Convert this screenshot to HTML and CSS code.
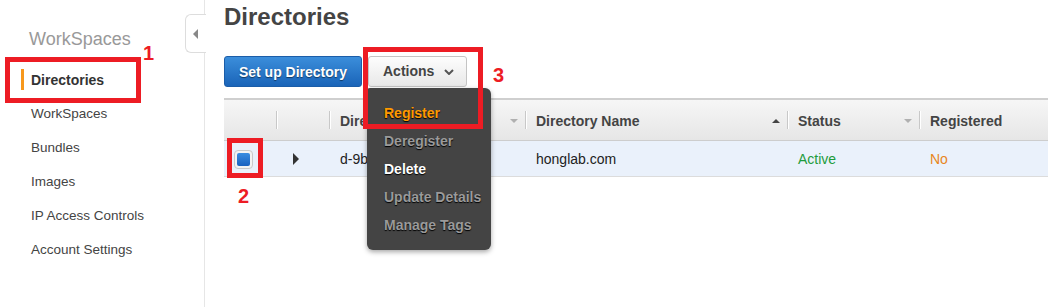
FILE: index.html
```html
<!DOCTYPE html>
<html lang="en">
<head>
  <meta charset="UTF-8">
  <meta name="viewport" content="width=device-width, initial-scale=1.0">
  <title>Directories - WorkSpaces</title>
  <link rel="stylesheet" href="styles.css">
</head>
<body>
  <div class="page">
    <aside class="sidebar">
      <div class="sidebar-title">WorkSpaces</div>
      <ul class="nav">
        <li class="nav-item active">Directories</li>
        <li class="nav-item">WorkSpaces</li>
        <li class="nav-item">Bundles</li>
        <li class="nav-item">Images</li>
        <li class="nav-item">IP Access Controls</li>
        <li class="nav-item">Account Settings</li>
      </ul>
      <div class="collapse-tab"><span class="collapse-arrow"></span></div>
    </aside>

    <main class="content">
      <h1>Directories</h1>

      <div class="toolbar">
        <button class="btn btn-primary">Set up Directory</button>
        <div class="actions">
          <button class="btn btn-default">
            Actions
            <svg class="chevron" width="10" height="6" viewBox="0 0 10 6"><path d="M1 1 L5 5 L9 1" fill="none" stroke="#555" stroke-width="2"/></svg>
          </button>
          <ul class="dropdown">
            <li class="menu-item highlight">Register</li>
            <li class="menu-item disabled">Deregister</li>
            <li class="menu-item">Delete</li>
            <li class="menu-item disabled">Update Details</li>
            <li class="menu-item disabled">Manage Tags</li>
          </ul>
        </div>
      </div>

      <div class="table">
        <div class="row head">
          <div class="cell"></div>
          <div class="cell divided"></div>
          <div class="cell divided">Directory ID<span class="sort down"></span></div>
          <div class="cell divided">Directory Name<span class="sort up"></span></div>
          <div class="cell divided">Status<span class="sort down"></span></div>
          <div class="cell divided">Registered</div>
        </div>
        <div class="row selected">
          <div class="cell"><span class="checkbox"><span class="checkbox-fill"></span></span></div>
          <div class="cell"><span class="expand"></span></div>
          <div class="cell">d-9b67230f1d</div>
          <div class="cell">honglab.com</div>
          <div class="cell status-active">Active</div>
          <div class="cell status-no">No</div>
        </div>
      </div>
    </main>
  </div>

  <!-- anotaciones -->
  <div class="mark mark-1"></div>
  <div class="mark mark-2"></div>
  <div class="mark mark-3"></div>
  <span class="mark-num num-1">1</span>
  <span class="mark-num num-2">2</span>
  <span class="mark-num num-3">3</span>
</body>
</html>
```

FILE: styles.css
```css
body {
  margin: 0;
  font-family: 'Liberation Sans', Arial, sans-serif;
  font-size: 14px;
  color: #444;
  background: #fff;
  height: 100vh;
  overflow: hidden;
}
.page {
  display: flex;
  height: 100%;
}

/* Sidebar */
.sidebar {
  position: relative;
  width: 205px;
  flex-shrink: 0;
  border-right: 1px solid #e6e6e6;
  padding-top: 28px;
  box-sizing: border-box;
}
.sidebar-title {
  padding-left: 29px;
  font-size: 18px;
  line-height: 22px;
  color: #999;
}
.nav {
  list-style: none;
  margin: 13px 0 0;
  padding: 0;
}
.nav-item {
  position: relative;
  padding-left: 31px;
  line-height: 34px;
  font-size: 13.5px;
  color: #444;
}
.nav-item.active {
  font-weight: bold;
  font-size: 14px;
  color: #333;
}
.nav-item.active::before {
  content: "";
  position: absolute;
  left: 21px;
  top: 6px;
  width: 3px;
  height: 21px;
  background: #f7981d;
}
.collapse-tab {
  position: absolute;
  left: 185px;
  top: 14px;
  width: 21px;
  height: 39px;
  box-sizing: border-box;
  border: 1px solid #ddd;
  border-right: none;
  border-radius: 6px 0 0 6px;
  background: #fff;
  display: flex;
  align-items: center;
  padding-left: 7px;
}
.collapse-arrow {
  width: 0;
  height: 0;
  border-right: 5px solid #888;
  border-top: 5px solid transparent;
  border-bottom: 5px solid transparent;
}

/* Content */
.content {
  flex: 1;
  padding-left: 19px;
}
h1 {
  margin: 3px 0 0;
  font-size: 24px;
  line-height: 28px;
  color: #444;
}
.toolbar {
  display: flex;
  gap: 6px;
  margin-top: 25px;
}
.btn {
  height: 31px;
  border-radius: 3px;
  font-family: inherit;
  font-size: 14px;
  font-weight: bold;
  cursor: pointer;
  box-sizing: border-box;
  padding-bottom: 1px;
}
.btn-primary {
  width: 138px;
  color: #fff;
  background: linear-gradient(#3b8edb, #1a64b8);
  border: 1px solid #1b5da8;
  text-shadow: 0 1px 1px rgba(0, 0, 0, 0.5);
}
.btn-default {
  width: 99px;
  color: #444;
  background: linear-gradient(#fdfdfd, #e8e8e8);
  border: 1px solid #c4c4c4;
  display: flex;
  align-items: center;
  padding: 0 0 1px 14px;
  gap: 10px;
}
.chevron {
  display: block;
  margin-top: 1px;
}
.actions {
  position: relative;
}
.dropdown {
  position: absolute;
  left: -1px;
  top: 32px;
  width: 124px;
  margin: 0;
  padding: 11px 0;
  list-style: none;
  background: #444;
  border-radius: 3px 6px 6px 6px;
  box-shadow: 0 2px 5px rgba(0, 0, 0, 0.35);
  z-index: 5;
}
.menu-item {
  padding-left: 17px;
  line-height: 28px;
  font-weight: bold;
  color: #fff;
  text-shadow: 0 1px 1px #000;
}
.menu-item.highlight {
  color: #ff9900;
}
.menu-item.disabled {
  color: #9a9a9a;
}

/* Table */
.table {
  margin-top: 11px;
  border-top: 2px solid #cfcfcf;
}
.row {
  display: grid;
  grid-template-columns: 52px 53px 196px 262px 132px 1fr;
}
.row.head {
  height: 41px;
  background: linear-gradient(#f6f6f6, #e6e6e6);
  border-bottom: 1px solid #cdcdcd;
  box-sizing: border-box;
  font-weight: bold;
  color: #444;
}
.row.head .cell {
  padding-top: 1px;
}
.row.selected {
  height: 36px;
  background: #eaf1fb;
  border-bottom: 1px solid #dcdcdc;
  box-sizing: border-box;
  color: #222;
}
.row.selected .cell {
  padding-top: 1px;
}
.cell {
  position: relative;
  display: flex;
  align-items: center;
  padding: 0 7px 0 11px;
  white-space: nowrap;
  overflow: hidden;
}
.cell.divided::before {
  content: "";
  position: absolute;
  left: 0;
  top: 11px;
  width: 1px;
  height: 18px;
  background: #c8c8c8;
  box-shadow: 1px 0 0 #fff;
}
.sort {
  margin-left: auto;
  width: 0;
  height: 0;
  border-left: 4px solid transparent;
  border-right: 4px solid transparent;
}
.sort.down {
  border-top: 4px solid #b0b0b0;
}
.sort.up {
  border-bottom: 4px solid #444;
}
.checkbox {
  margin-left: -1px;
  width: 19px;
  height: 19px;
  box-sizing: border-box;
  border: 1px solid #c9c9c9;
  border-radius: 4px;
  background: #f3f3f3;
  display: flex;
  align-items: center;
  justify-content: center;
}
.checkbox-fill {
  width: 13px;
  height: 13px;
  border-radius: 2px;
  background: linear-gradient(#3a8de0, #1a62c0);
}
.expand {
  margin-left: 6px;
  width: 0;
  height: 0;
  border-left: 6px solid #333;
  border-top: 6px solid transparent;
  border-bottom: 6px solid transparent;
}
.status-active {
  color: #1e9c3c;
}
.status-no {
  color: #e8861c;
}

/* Annotations */
.mark {
  position: absolute;
  border: 5px solid #ed1c24;
  box-sizing: border-box;
  z-index: 10;
}
.mark-1 {
  left: 5px;
  top: 57px;
  width: 136px;
  height: 46px;
}
.mark-2 {
  left: 227px;
  top: 138px;
  width: 36px;
  height: 40px;
}
.mark-3 {
  left: 363px;
  top: 47px;
  width: 120px;
  height: 82px;
}
.mark-num {
  position: absolute;
  color: #ed1c24;
  font-weight: bold;
  font-size: 20px;
  line-height: 20px;
}
.num-1 {
  left: 143px;
  top: 43px;
}
.num-2 {
  left: 238px;
  top: 186px;
}
.num-3 {
  left: 493px;
  top: 65px;
}
```
